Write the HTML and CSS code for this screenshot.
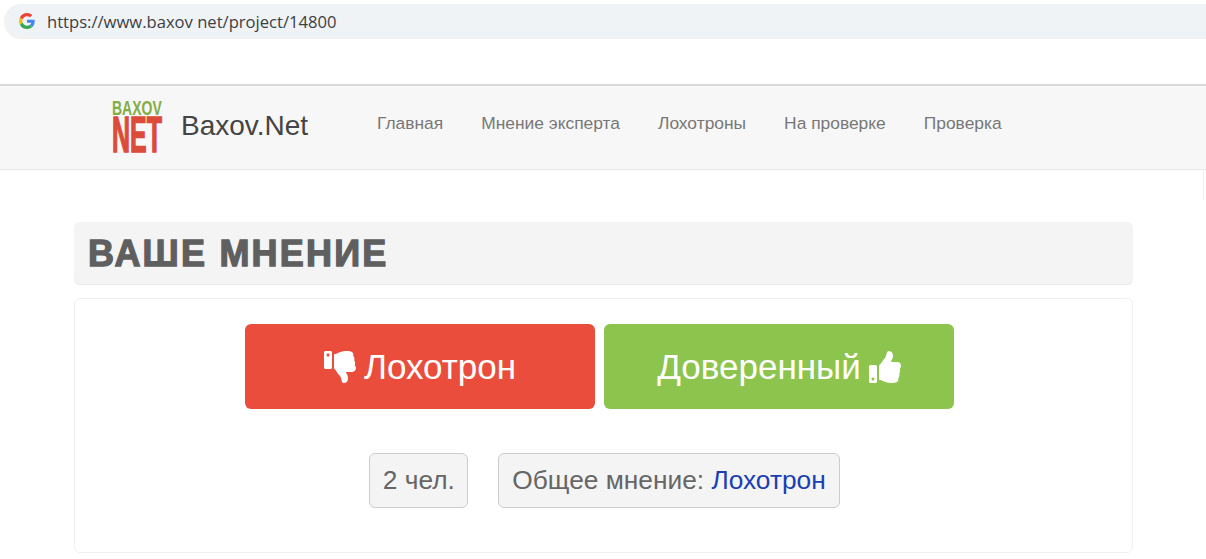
FILE: index.html
```html
<!DOCTYPE html>
<html lang="ru">
<head>
<meta charset="utf-8">
<title>Baxov.Net</title>
<link rel="stylesheet" href="styles.css">
</head>
<body>
<div class="browser">
  <div class="urlbar">
    <svg class="g-icon" viewBox="0 0 48 48" width="16" height="16" aria-hidden="true">
      <path fill="#EA4335" d="M24 9.500c3.500 0 6.700 1.200 9.200 3.600l6.900-6.900C35.900 2.400 30.500 0 24 0 14.600 0 6.500 5.400 2.600 13.200l8 6.200C12.500 13.600 17.800 9.500 24 9.500z"/>
      <path fill="#4285F4" d="M47 24.500c0-1.600-.1-3.100-.4-4.500H24v9h12.900c-.6 3-2.200 5.500-4.700 7.200l7.700 6c4.500-4.200 7.100-10.300 7.100-17.700z"/>
      <path fill="#FBBC05" d="M10.600 28.600c-.5-1.400-.8-3-.8-4.600s.3-3.200.8-4.600l-8-6.200C.9 16.500 0 20.100 0 24s.9 7.500 2.600 10.800l8-6.200z"/>
      <path fill="#34A853" d="M24 48c6.500 0 11.900-2.100 15.900-5.800l-7.700-6c-2.200 1.400-4.900 2.300-8.200 2.300-6.200 0-11.500-4.200-13.400-9.800l-8 6.200C6.500 42.600 14.600 48 24 48z"/>
    </svg>
    <span class="url">https://www.baxov net/project/14800</span>
  </div>
</div>
<nav class="navbar">
  <a class="logo" href="#">
    <span class="logo-top">BAXOV</span>
    <span class="logo-net">NET</span>
  </a>
  <a class="brand" href="#">Baxov.Net</a>
  <ul class="menu">
    <li><a href="#">Главная</a></li>
    <li><a href="#">Мнение эксперта</a></li>
    <li><a href="#">Лохотроны</a></li>
    <li><a href="#">На проверке</a></li>
    <li><a href="#">Проверка</a></li>
  </ul>
</nav>
<i class="scroll-sliver"></i>
<main class="content">
  <h2 class="panel-title">ВАШЕ МНЕНИЕ</h2>
  <section class="vote-card">
    <div class="vote-buttons">
      <a class="vote vote-bad" href="#">
        <svg class="thumb" viewBox="0 0 512 512" width="32" height="32" aria-hidden="true">
          <path transform="matrix(1 0 0 -1 0 512)" fill="#fff" d="M104 224H24c-13.255 0-24 10.745-24 24v240c0 13.255 10.745 24 24 24h80c13.255 0 24-10.745 24-24V248c0-13.255-10.745-24-24-24zM64 472c-13.255 0-24-10.745-24-24s10.745-24 24-24 24 10.745 24 24-10.745 24-24 24zM384 81.452c0 42.416-25.970 66.208-33.277 94.548h101.723c33.397 0 59.397 27.746 59.553 58.098.084 17.938-7.546 37.249-19.439 49.197l-.11.11c9.836 23.337 8.237 56.037-9.308 79.469 8.681 25.895-.069 57.704-16.382 74.757 4.298 17.598 2.244 32.575-6.148 44.632C440.202 511.587 389.616 512 346.839 512l-2.845-.001c-48.287-.017-87.806-17.598-119.560-31.725-15.957-7.099-36.821-15.887-52.651-16.178-6.540-.12-11.783-5.457-11.783-11.998v-213.770c0-3.200 1.282-6.271 3.558-8.521 39.614-39.144 56.648-80.587 89.117-113.111 14.804-14.832 20.188-37.236 25.393-58.902C282.515 39.293 291.817 0 312 0c24 0 72 8 72 81.452z"/>
        </svg>
        <span>Лохотрон</span>
      </a>
      <a class="vote vote-good" href="#">
        <span>Доверенный</span>
        <svg class="thumb" viewBox="0 0 512 512" width="32" height="32" aria-hidden="true">
          <path fill="#fff" d="M104 224H24c-13.255 0-24 10.745-24 24v240c0 13.255 10.745 24 24 24h80c13.255 0 24-10.745 24-24V248c0-13.255-10.745-24-24-24zM64 472c-13.255 0-24-10.745-24-24s10.745-24 24-24 24 10.745 24 24-10.745 24-24 24zM384 81.452c0 42.416-25.970 66.208-33.277 94.548h101.723c33.397 0 59.397 27.746 59.553 58.098.084 17.938-7.546 37.249-19.439 49.197l-.11.11c9.836 23.337 8.237 56.037-9.308 79.469 8.681 25.895-.069 57.704-16.382 74.757 4.298 17.598 2.244 32.575-6.148 44.632C440.202 511.587 389.616 512 346.839 512l-2.845-.001c-48.287-.017-87.806-17.598-119.560-31.725-15.957-7.099-36.821-15.887-52.651-16.178-6.540-.12-11.783-5.457-11.783-11.998v-213.770c0-3.200 1.282-6.271 3.558-8.521 39.614-39.144 56.648-80.587 89.117-113.111 14.804-14.832 20.188-37.236 25.393-58.902C282.515 39.293 291.817 0 312 0c24 0 72 8 72 81.452z"/>
        </svg>
      </a>
    </div>
    <div class="vote-stats">
      <span class="chip chip-count">2 чел.</span>
      <span class="chip">Общее мнение: <a href="#" class="verdict">Лохотрон</a></span>
    </div>
  </section>
</main>
</body>
</html>
```
FILE: styles.css
```css
* { box-sizing: border-box; }
html, body { margin: 0; padding: 0; height: 559px; overflow: hidden; background: #fff; }
body { font-family: "Liberation Sans", Arial, sans-serif; color: #666; position: relative; }
a { text-decoration: none; color: inherit; }

.browser { height: 84px; padding: 4px 0 0 4px; }
.urlbar {
  height: 35px;
  display: flex;
  align-items: center;
  padding-left: 15px;
  gap: 12px;
  background: #f0f3f6;
  border-radius: 17px 0 0 17px;
  border-bottom: 1px solid #f0f0f0;
}
.g-icon { flex: none; margin-top: -1px; }
.url { font: 16.600px "Open Sans", sans-serif; color: #3c4043; }

.navbar {
  height: 86px;
  display: flex;
  align-items: center;
  padding-left: 112px;
  background: #f7f7f7;
  border-top: 2px solid #d9d9d9;
  border-bottom: 1px solid #e7e7e7;
}
.logo { width: 51px; height: 55px; display: flex; flex-direction: column; align-items: flex-start; font-weight: 700; flex: none; }
.logo-top { color: #82ad44; font-size: 20px; height: 16px; line-height: 16px; transform-origin: 0 50%; transform: scaleX(.7); }
.logo-net { color: #dc4b39; font-size: 50px; height: 38px; line-height: 38px; transform-origin: 0 50%; transform: scaleX(.5); -webkit-text-stroke: 1.500px #dc4b39; }
.brand { font-size: 28px; color: #444; margin: 0 0 4px 18px; width: 196px; flex: none; }
.menu { list-style: none; display: flex; gap: 38px; margin: 0 0 9px; padding: 0; font-size: 17.400px; color: #777; }

.scroll-sliver { position: absolute; right: 2px; top: 169px; width: 1px; height: 31px; background: #eee; }

.content { width: 1059px; margin: 52px 0 0 74px; }
.panel-title {
  margin: 0;
  height: 62px;
  padding: 2px 0 0 14px;
  display: flex;
  align-items: center;
  background: #f4f4f4;
  border-radius: 6px;
  box-shadow: 0 1px 1px #e8e8e8;
  color: #5f5f5f;
  font-size: 36px;
  font-weight: 700;
  letter-spacing: 2.200px;
  -webkit-text-stroke: 1.300px #5f5f5f;
}
.vote-card {
  margin-top: 14px;
  height: 255px;
  border: 1px solid #f0f0f0;
  border-radius: 6px;
  padding-top: 25px;
  background: #fff;
}
.vote-buttons { display: flex; justify-content: center; gap: 9px; padding-right: 8px; }
.vote {
  width: 350px;
  height: 85px;
  border-radius: 6px;
  display: flex;
  align-items: center;
  justify-content: center;
  gap: 8px;
  color: #fff;
  font-size: 35px;
}
.vote-bad { background: #eb4d3d; }
.vote-good { background: #8cc44d; }
.thumb { flex: none; }
.vote-stats { display: flex; justify-content: center; gap: 30px; margin-top: 44px; padding-left: 2px; }
.chip {
  height: 55px;
  padding: 0 13px;
  display: flex;
  align-items: center;
  white-space: pre;
  background: #f4f4f4;
  border: 1px solid #ccc;
  border-radius: 6px;
  font-size: 26.300px;
  color: #666;
}
.chip-count { padding: 0 12.500px; }
.verdict { color: #1a3fb5; }
```
